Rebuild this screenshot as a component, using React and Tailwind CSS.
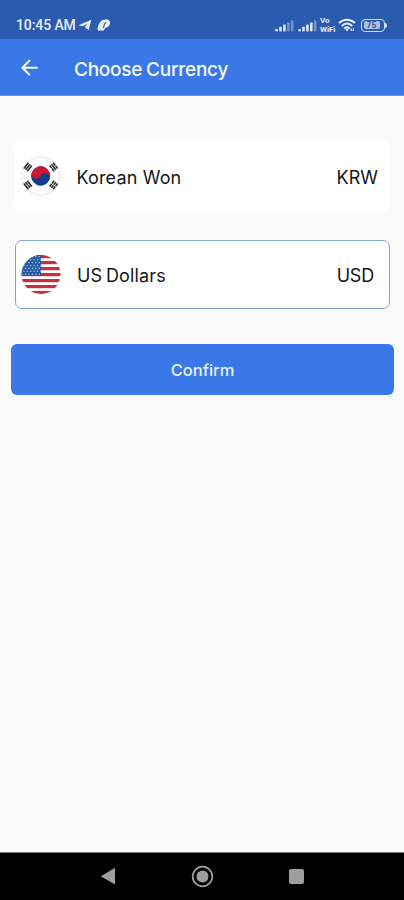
function Signal({ bars }) {
  return (
    <svg width="19" height="13" viewBox="0 0 19 13" fill="#dce8fa">
      {[0, 1, 2, 3, 4].map((i) => (
        <rect key={i} x={0.3 + i * 3.9} y={10 - i * 2.2} width="2.6" height={2.5 + i * 2.2} rx="0.8" opacity={i < bars ? 1 : 0.4} />
      ))}
    </svg>
  );
}

function StatusBar() {
  return (
    <div className="h-[39px] bg-[#2b5bae] pt-[11px] pl-4 pr-[17px] flex items-center justify-between text-[#e6effc]">
      <div className="flex items-center">
        <span className="w-[61px] font-['Roboto',sans-serif] text-[14px] font-medium leading-7 tracking-[-0.1px] whitespace-nowrap">10:45 AM</span>
        <svg className="ml-[1px]" width="14" height="12" viewBox="0 0 14 12" fill="currentColor">
          <path d="M13.4 0.8 L0.4 6.2 L4.8 7.2 L9 4.4 L6.8 7.9 L10.6 11.3 Z" />
        </svg>
        <svg className="ml-[5px]" width="14" height="13" viewBox="0 0 14 13" fill="currentColor">
          <path d="M5.6 0.9 C2.8 2.2 0.2 7.4 0.7 10.4 C1 12.3 3.2 12.2 3.8 10.6 C4.6 8 4.8 4 7.4 1.3 C7 0.6 6.3 0.6 5.6 0.9 Z" />
          <path d="M7.2 0.9 C4.5 3 4 7.8 3.2 10.4 C4 12 6.6 12.2 7.3 10.4 L8.2 9 C11.6 8.4 13.4 5.6 13 3 C12.4 0.2 9 -0.4 7.2 0.9 Z" />
          <path d="M8.6 3.4 C7.4 5 6.9 6.8 6.4 8.6" fill="none" stroke="#2b5bae" strokeWidth="1.2" strokeLinecap="round" />
        </svg>
      </div>
      <div className="flex items-center">
        <Signal bars={3} />
        <span className="w-[4px]" />
        <Signal bars={4} />
        <span className="ml-px w-[19px] h-[18px] flex flex-col justify-between font-['Roboto',sans-serif] text-[8px] font-bold leading-[9px]">
          <span className="pl-[2px]">Vo</span>
          <span className="pl-[2px] tracking-[-0.1px]">WiFi</span>
        </span>
        <svg className="ml-px" width="19" height="15" viewBox="0 0 19 15" fill="none" stroke="currentColor" strokeWidth="2">
          <path d="M1 5 C5.8 0.6 12.2 0.6 17 5" />
          <path d="M3.7 7.9 C7 4.9 11 4.9 14.3 7.9" />
          <path d="M6.2 10.5 C8 9 10 9 11.8 10.5" />
          <path d="M6.8 10.6 L11.2 10.6 L9 13.6 Z" fill="currentColor" stroke="none" />
          <path d="M13.2 13 V10.4 M15.3 10.4 V13" strokeWidth="1.2" />
        </svg>
        <div className="ml-[4px] flex items-center">
          <div className="w-[24px] h-[13px] rounded-[4px] border-[1.5px] border-[#c9dcf8] p-[1.5px]">
            <div className="w-[16px] h-full rounded-[2px] bg-[#aebfe2] text-[#2b5bae] font-['Roboto',sans-serif] text-[8.5px] font-bold leading-[9px] text-center">75</div>
          </div>
          <div className="w-[2px] h-[5px] rounded-r-[2px] bg-[#c9dcf8]" />
        </div>
      </div>
    </div>
  );
}

function Header() {
  return (
    <div className="h-[57px] bg-[#3b78e7] border-b border-[#6394ec] pl-[21px] flex items-center text-[#f4f8ff]">
      <svg className="mt-[2px]" width="18" height="18" viewBox="0 0 18 18" fill="none" stroke="currentColor" strokeWidth="2" strokeLinecap="round" strokeLinejoin="round">
        <path d="M16 8.7 H1.7 M8.3 1.8 L1.4 8.7 L8.3 15.6" />
      </svg>
      <h1 className="ml-[35px] mt-[5px] font-['Inter',sans-serif] text-[19px] font-medium leading-6 tracking-[-0.25px] [word-spacing:-1px]">Choose Currency</h1>
    </div>
  );
}

// three bars, each either whole or split in the middle
function Trigram({ x, y, angle, split }) {
  return (
    <g transform={`translate(${x} ${y}) rotate(${angle})`} stroke="#2a2a2a" strokeWidth="1.6">
      {split.map((s, i) => (
        <path key={i} d={s ? "M-3.6 0 H-0.3 M0.3 0 H3.6" : "M-3.6 0 H3.6"} transform={`translate(0 ${(i - 1) * 2.2})`} />
      ))}
    </g>
  );
}

function KoreaFlag() {
  return (
    <svg width="40" height="40" viewBox="0 0 40 40">
      <circle cx="20" cy="20" r="19" fill="#fff" stroke="#dcdcdc" strokeWidth="0.8" />
      <Trigram x={6.8} y={11} angle={-52} split={[false, false, false]} />
      <Trigram x={32.6} y={11} angle={52} split={[true, false, true]} />
      <Trigram x={6.8} y={29} angle={52} split={[false, true, false]} />
      <Trigram x={32.6} y={29} angle={-52} split={[true, true, true]} />
      <g transform="rotate(25 19.7 20)">
        <circle cx="19.7" cy="20" r="9.6" fill="#123b87" />
        <path d="M10.1 20 A9.6 9.6 0 0 1 29.3 20 A4.8 4.8 0 0 0 19.7 20 A4.8 4.8 0 0 1 10.1 20 Z" fill="#cd1735" />
      </g>
    </svg>
  );
}

function UsaFlag() {
  return (
    <svg width="40" height="40" viewBox="0 0 40 40">
      <clipPath id="usa">
        <circle cx="20" cy="19.5" r="19.5" />
      </clipPath>
      <g clipPath="url(#usa)">
        <rect width="40" height="40" fill="#fff" />
        {[0, 1, 2, 3, 4, 5, 6].map((i) => (
          <rect key={i} y={i * 6} width="40" height="3.2" fill="#c9303a" />
        ))}
        <rect width="20" height="21" fill="#2257a3" />
        {[0, 1, 2, 3, 4, 5, 6].map((r) =>
          [0, 1, 2, 3, 4, 5].map((c) => (
            <circle key={`${r}-${c}`} cx={1.2 + c * 3.4 + (r % 2) * 1.7} cy={1.8 + r * 2.9} r="0.8" fill="#b5c9e6" />
          ))
        )}
      </g>
    </svg>
  );
}

export default function App() {
  return (
    <div className="h-[900px] w-[404px] flex flex-col overflow-hidden bg-[#fafafa] font-['Inter',sans-serif]">
      <StatusBar />
      <Header />
      <main className="flex-1 pt-[45px]">
        <div className="ml-[15px] mr-[14px] h-[70px] rounded-md bg-white pl-[6px] pr-[12px] flex items-center text-[18px] text-[#161616]">
          <KoreaFlag />
          <span className="ml-[15.5px] mt-[3px] tracking-[0.15px]">Korean Won</span>
          <span className="ml-auto mt-[3px]">KRW</span>
        </div>
        <div className="ml-[15px] mr-[14px] mt-[29px] h-[69px] rounded-[7px] border border-[#7fa6d8] bg-white pl-[5px] pr-[15px] flex items-center text-[18px] text-[#161616]">
          <UsaFlag />
          <span className="ml-[16px] mt-[2px] tracking-[0.15px] [word-spacing:-1.5px]">US Dollars</span>
          <span className="ml-auto mt-[2px] tracking-[-0.2px]">USD</span>
        </div>
        <button className="ml-[11px] mt-[35px] w-[383px] h-[51px] rounded-[6px] bg-[#3b78e7] pt-[2px] text-[16.5px] font-medium text-[#e8f0ff] block">Confirm</button>
      </main>
      <nav className="h-[48px] bg-black border-t border-[#777] flex items-center pl-[100px]">
        <svg className="-mt-[2px]" width="16" height="18" viewBox="0 0 16 18" fill="#9e9e9e">
          <path d="M15 0.7 V17.5 L0.8 9.2 Z" />
        </svg>
        <svg className="ml-[75px] -mt-px" width="23" height="23" viewBox="0 0 23 23">
          <circle cx="11.5" cy="11.5" r="9.8" fill="none" stroke="#9e9e9e" strokeWidth="1.7" />
          <circle cx="11.5" cy="11.5" r="6" fill="#9e9e9e" />
        </svg>
        <div className="ml-[75px] size-[15px] rounded-[2px] bg-[#9e9e9e]" />
      </nav>
    </div>
  );
}
